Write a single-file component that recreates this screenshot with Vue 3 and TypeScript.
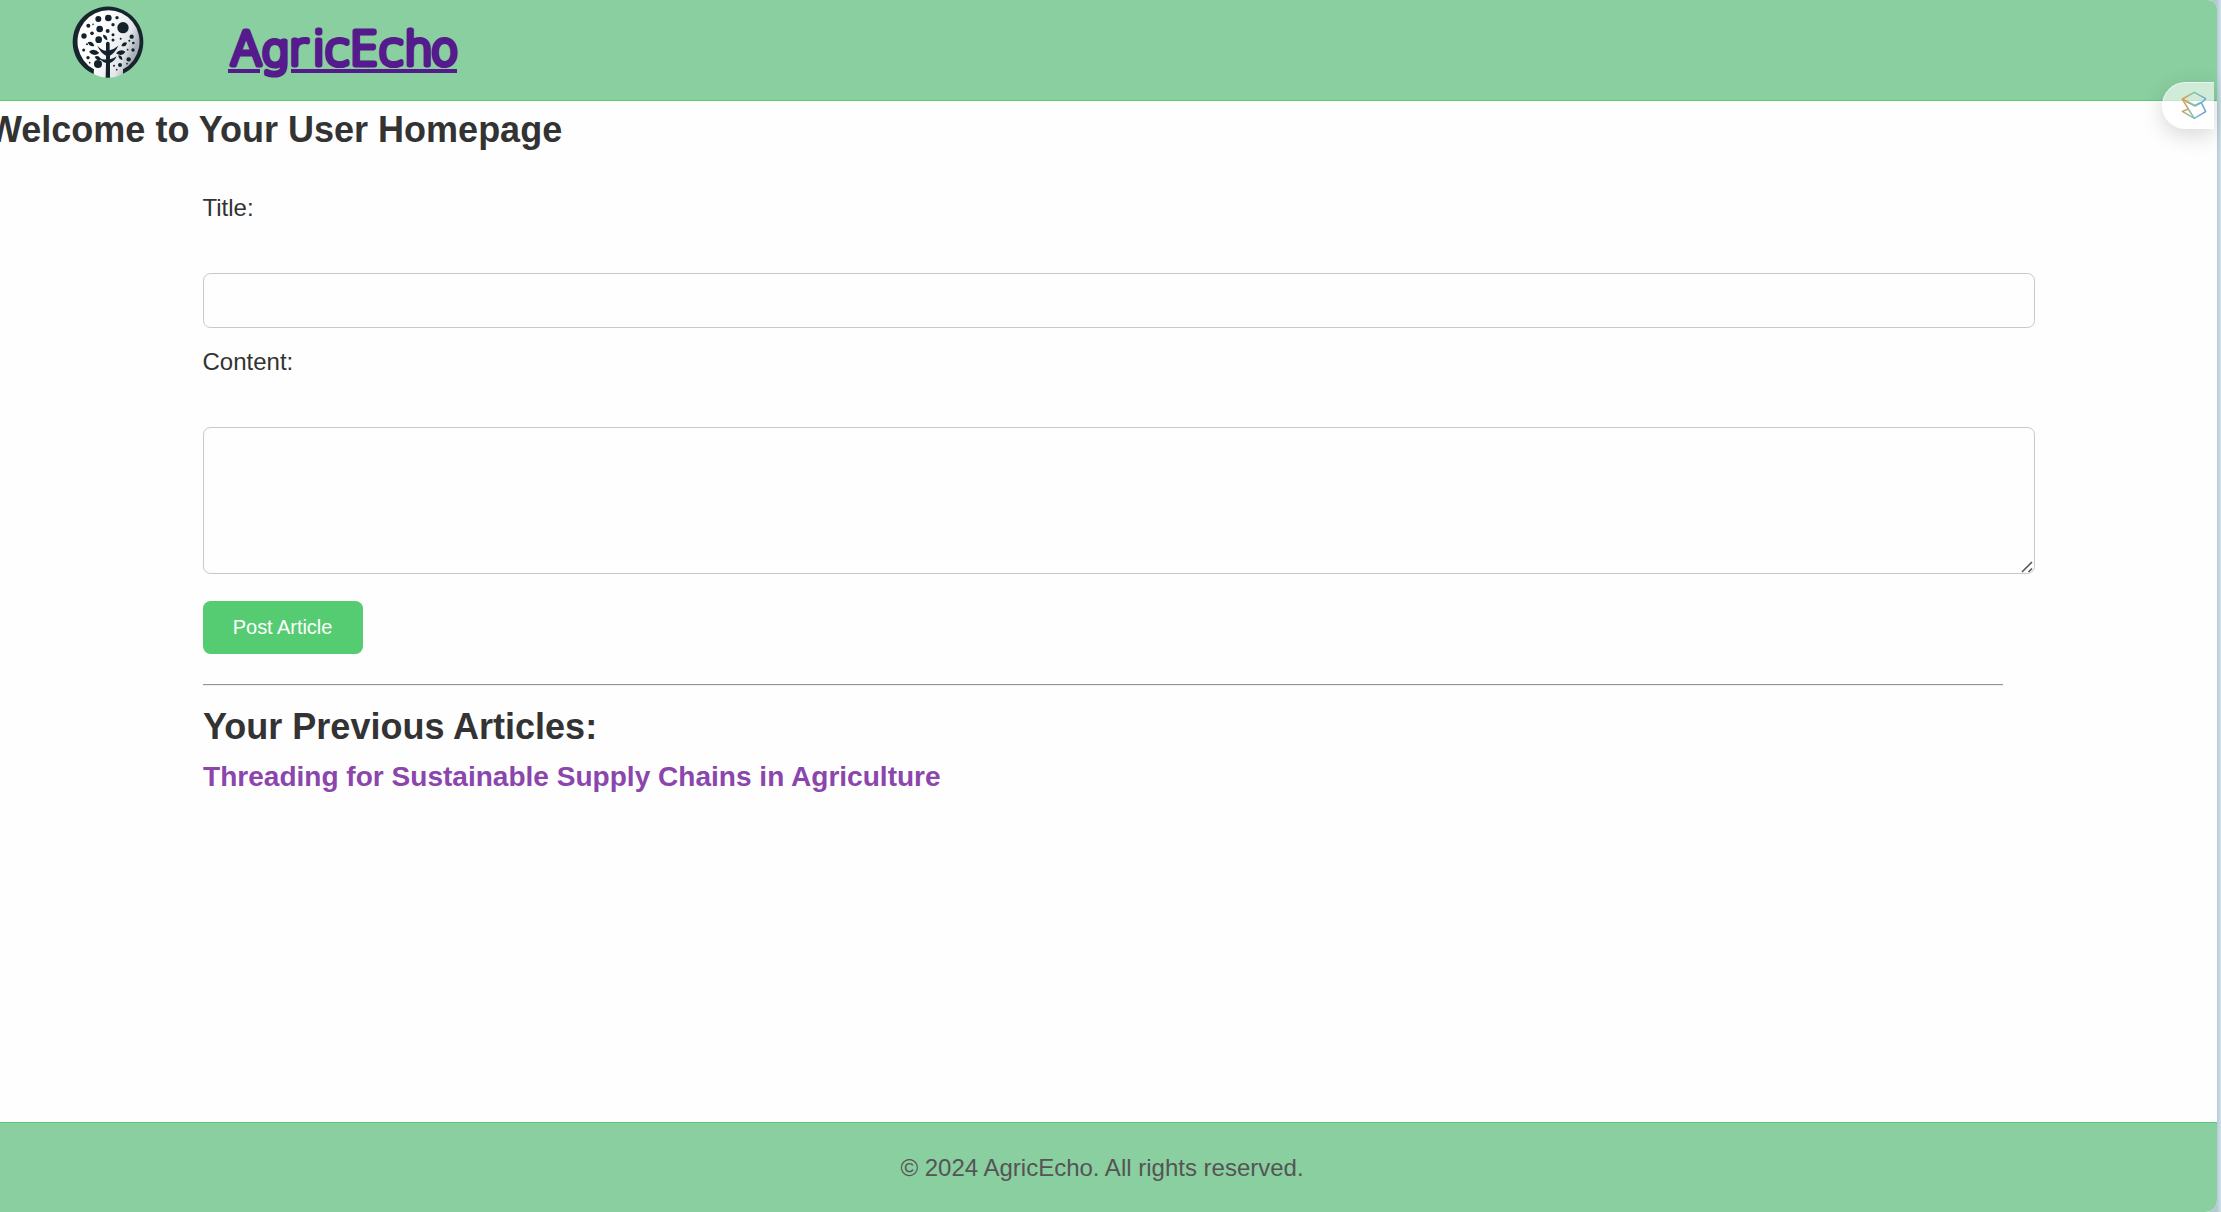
<script setup lang="ts">
import { ref } from 'vue'

const title = ref('')
const content = ref('')
const articles: string[] = ['Threading for Sustainable Supply Chains in Agriculture']

// Seed dots scattered over the crown of the tree: [cx, cy, r]
const seeds: number[][] = [
  [116, 56, 9], [146, 53, 10], [172, 52, 5], [86, 76, 6], [120, 86, 10], [160, 73, 5],
  [190, 82, 17], [73, 107, 8], [97, 99, 5.5], [144, 92, 6], [160, 103, 4.5], [117, 118, 10],
  [160, 119, 4.5], [183, 115, 3], [216, 109, 6.5], [209, 121, 3], [221, 128, 4], [82, 132, 3],
  [72, 149, 4.5], [220, 149, 5], [204, 148, 2.5], [85, 172, 5], [115, 191, 12], [90, 187, 2.5],
  [207, 177, 6.5], [181, 194, 6], [163, 196, 3], [202, 190, 2.5], [171, 208, 2.5], [100, 72, 2.5],
]
</script>

<template>
  <div class="window">
    <div class="page">
      <header class="header">
        <svg class="logo" viewBox="37 17 216 216">
          <defs>
            <linearGradient id="disc" x1="0" y1="0" x2="1" y2="0.4">
              <stop offset="0.5" stop-color="#fdfdfd" />
              <stop offset="0.85" stop-color="#e4e7ea" />
              <stop offset="1" stop-color="#a9b1b8" />
            </linearGradient>
          </defs>
          <path d="M103 222A106 106 0 1 1 187 222Z" fill="#17262e" />
          <path d="M103 207A93 94 0 1 1 190 207L190 222Q146 243 102 222Z" fill="url(#disc)" />
          <g fill="#14232b">
            <circle v-for="(s, i) in seeds" :key="i" :cx="s[0]" :cy="s[1]" :r="s[2]" />
            <path d="M84 126Q98 120 104 137Q90 141 84 126ZM88 154Q103 140 119 158Q102 172 88 154ZM130 103Q144 104 143 120Q130 116 130 103ZM185 137Q190 122 202 127Q200 141 185 137ZM169 159Q181 143 197 154Q187 171 169 159ZM105 169Q118 162 124 178Q111 183 105 169ZM176 165Q189 165 188 179Q177 178 176 165Z" />
            <path d="M138 232L139 188Q125 184 119 172Q132 180 139 177V166Q122 157 113 136Q127 151 139 151V128Q144 121 150 128V150Q164 146 176 136Q166 157 151 166V177Q163 174 171 168Q164 184 151 188V232Z" />
          </g>
        </svg>
        <a class="brand">
          <svg width="236" height="90" viewBox="0 0 236 90">
            <text class="brand-text" y="64.500 65.500 64.500 64.500 64.500 65 64.500" x="2.500 33 60.500 84.500 96.500 121.500 150.500 176 202.500">AgricEcho</text>
            <path d="M0 71H32M63 71H229" stroke="#551a8b" stroke-width="4" />
          </svg>
        </a>
      </header>

      <main class="main">
        <h2 class="welcome">Welcome to Your User Homepage</h2>
        <section class="content">
          <form class="form" @submit.prevent>
            <label for="title">Title:</label>
            <input id="title" v-model="title" type="text" />
            <label for="content">Content:</label>
            <div class="area">
              <textarea id="content" v-model="content"></textarea>
              <svg class="grip" width="12" height="12" viewBox="0 0 12 12">
                <path d="M1 11L11 1M7.500 11L11 7.500" stroke="#555" stroke-width="1.600" />
              </svg>
            </div>
            <button type="submit">Post Article</button>
          </form>
          <div class="rule"></div>
          <h2 class="previous">Your Previous Articles:</h2>
          <h3 v-for="a in articles" :key="a" class="article">{{ a }}</h3>
        </section>
      </main>

      <footer class="footer">© 2024 AgricEcho. All rights reserved.</footer>
    </div>

    <div class="widget">
      <svg width="26" height="28" viewBox="0 0 78 84" fill="none" stroke-width="4.500" stroke-linejoin="round">
        <defs>
          <linearGradient id="ribbon" gradientUnits="userSpaceOnUse" x1="2" y1="30" x2="76" y2="40">
            <stop offset="0" stop-color="#ee9444" />
            <stop offset="0.5" stop-color="#7cc4ae" />
            <stop offset="1" stop-color="#6c9fda" />
          </linearGradient>
        </defs>
        <g stroke="url(#ribbon)">
          <path d="M4 24L40 4L74 23Q68 33 56 36L42 43Z" />
          <path d="M4 24L22 54L40 82L74 62L61 35L42 45L14 31" />
          <path d="M22 54L4 61L40 82" />
        </g>
      </svg>
    </div>
  </div>
</template>

<style>
body {
  margin: 0;
  overflow: hidden;
}
</style>

<style scoped>
.window {
  position: relative;
  width: 2221px;
  height: 1212px;
  overflow: hidden;
  background: linear-gradient(90deg, #b4c9d1 2217px, #c9dee6 2220px);
  font-family: "Liberation Sans", Arial, sans-serif;
  font-size: 24px;
  color: #333;
}
.page {
  display: flex;
  flex-direction: column;
  width: 2217px;
  height: 1212px;
  overflow: hidden;
  background: #fefefe;
  border-radius: 0 9px 12px 0;
}
.header {
  display: flex;
  align-items: flex-start;
  box-sizing: border-box;
  height: 101px;
  padding-left: 72px;
  background: #8acfa0;
  border-bottom: 1px solid #56cc72;
}
.logo {
  width: 72px;
  height: 72px;
  margin-top: 6px;
}
.brand {
  display: block;
  height: 90px;
  margin-left: 84px;
}
.brand svg {
  display: block;
}
.brand-text {
  font-family: "Comic Sans MS", "DejaVu Sans Light", "DejaVu Sans", sans-serif;
  font-size: 46px;
  font-weight: 200;
  fill: #551a8b;
  stroke: #551a8b;
  stroke-width: 5.200px;
  stroke-linejoin: round;
}
.main {
  flex: 1;
}
h2,
h3 {
  margin: 0;
}
.welcome {
  margin-left: -12px;
  padding-top: 8px;
  font-size: 36px;
  line-height: 42px;
  white-space: nowrap;
}
.content {
  width: 1832px;
  margin-left: 203px;
}
.form {
  display: flex;
  flex-direction: column;
  align-items: flex-start;
  padding-top: 43px;
}
label {
  height: 79px;
  margin-left: -0.500px;
  line-height: 28px;
}
input,
textarea {
  display: block;
  box-sizing: border-box;
  width: 1832px;
  margin: 0;
  padding: 15px;
  border: 1px solid #c8c8c8;
  border-radius: 7.500px;
  background: #fefefe;
  font: 24px "Liberation Sans", Arial, sans-serif;
  color: #333;
  outline: none;
}
input {
  height: 55px;
  margin-bottom: 20px;
}
textarea {
  height: 147px;
  resize: none;
}
.area {
  position: relative;
}
.grip {
  position: absolute;
  right: 2px;
  bottom: 1px;
}
button {
  width: 160px;
  height: 53px;
  margin: 27px 0 0;
  padding: 0 1px 0 0;
  border: 0;
  border-radius: 7.500px;
  background: #56cc72;
  color: #fff;
  font: 20px "Liberation Sans", Arial, sans-serif;
  letter-spacing: -0.050px;
}
.rule {
  width: 1800px;
  height: 1px;
  margin-top: 30px;
  background: #939393;
  border-bottom: 1px solid #eee;
}
.previous {
  margin-top: 20px;
  font-size: 36px;
  line-height: 42px;
}
.article {
  margin-top: 13px;
  font-size: 28.050px;
  line-height: 32px;
  color: #8b45ad;
}
.footer {
  box-sizing: border-box;
  height: 90px;
  padding-right: 13px;
  border-top: 1px solid #56cc72;
  background: #8acfa0;
  color: #555;
  line-height: 90px;
  text-align: center;
}
.widget {
  position: absolute;
  top: 82px;
  left: 2162px;
  display: flex;
  align-items: center;
  box-sizing: border-box;
  width: 52px;
  height: 47px;
  padding: 0 0 2px 18px;
  border: 1px solid rgba(255, 255, 255, 0.5);
  border-right: 0;
  border-radius: 24px 0 0 24px;
  background: rgba(255, 255, 255, 0.6);
  box-shadow: 0 6px 22px rgba(0, 0, 0, 0.16);
}
</style>
